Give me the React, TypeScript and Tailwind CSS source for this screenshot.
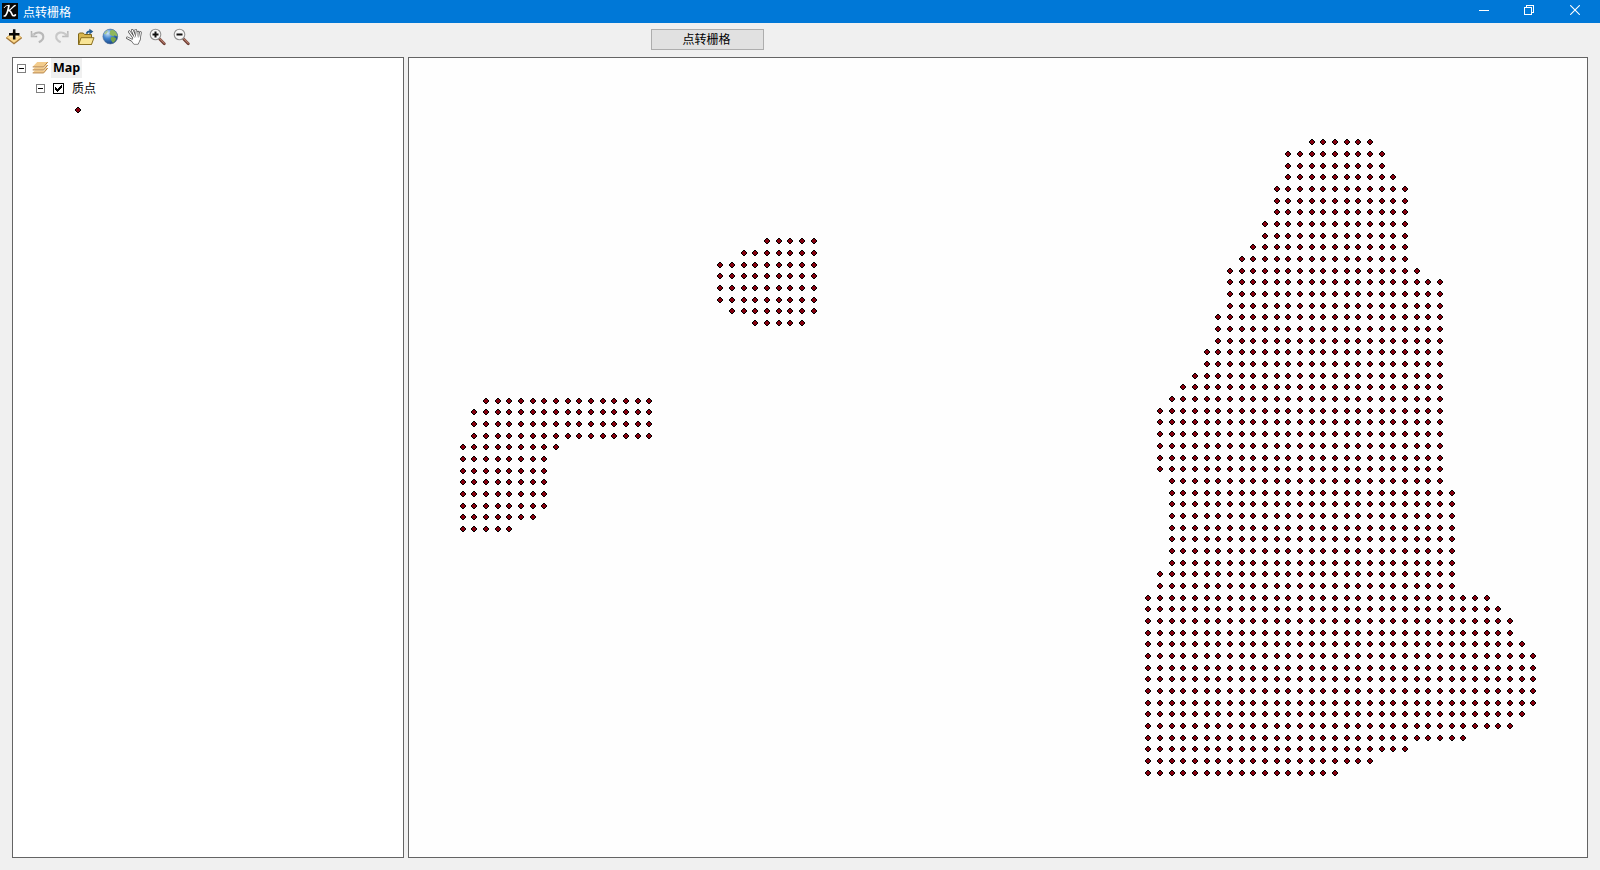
import type { ReactNode } from "react";

type Span = [from: number, to: number, rows: number];

interface Cluster {
  x: (i: number) => number;
  y: (j: number) => number;
  spans: Span[];
}

const STEP = 35 / 3;

const clusters: Cluster[] = [
  {
    x: (i) => 463 + Math.floor(i * STEP + 0.001),
    y: (j) => 401 + Math.floor(j * STEP + 0.001),
    spans: [[2, 16, 1], [1, 16, 3], [0, 8, 1], [0, 7, 5], [0, 6, 1], [0, 4, 1]],
  },
  {
    x: (i) => 720 + Math.ceil(i * STEP - 0.001),
    y: (j) => 241 + Math.ceil(j * STEP - 0.001),
    spans: [[4, 8, 1], [2, 8, 1], [0, 8, 4], [1, 8, 1], [3, 7, 1]],
  },
  {
    x: (i) => 1148 + Math.ceil(i * STEP - 0.001),
    y: (j) => 142 + Math.ceil(j * STEP + j * 0.001 - 0.025),
    spans: [
      [14, 19, 1], [12, 20, 2], [12, 21, 1], [11, 22, 3], [10, 22, 2], [9, 22, 1],
      [8, 22, 1], [7, 23, 1], [7, 25, 3], [6, 25, 3], [5, 25, 2], [4, 25, 1],
      [3, 25, 1], [2, 25, 1], [1, 25, 6], [2, 25, 1], [2, 26, 7], [1, 26, 2],
      [0, 29, 1], [0, 30, 1], [0, 31, 2], [0, 32, 1], [0, 33, 5], [0, 32, 1],
      [0, 31, 1], [0, 27, 1], [0, 22, 1], [0, 19, 1], [0, 16, 1],
    ],
  },
];

const points = clusters.flatMap(({ x, y, spans }) => {
  const out: { x: number; y: number }[] = [];
  let row = 0;
  for (const [from, to, rows] of spans) {
    for (let r = 0; r < rows; r++, row++) {
      for (let i = from; i <= to; i++) out.push({ x: x(i), y: y(row) });
    }
  }
  return out;
});

function Marker({ x, y }: { x: number; y: number }) {
  return (
    <g transform={`translate(${x - 3} ${y - 3})`}>
      <path d="M2 0h2v1h1v1h1v2h-1v1h-1v1h-2v-1h-1v-1h-1v-2h1v-1h1z" fill="#000" />
      <path d="M2 1h2v1h1v2h-1v1h-2v-1h-1v-2h1z" fill="#87000f" />
    </g>
  );
}

function Icon({ children }: { children: ReactNode }) {
  return (
    <svg className="block h-[18px] w-[18px]" viewBox="0 0 18 18" fill="none">
      {children}
    </svg>
  );
}

function AddIcon() {
  return (
    <Icon>
      <path d="M9 4 16.500 9.500 9 15.300 1.500 9.500Z" fill="#fbd98c" stroke="#d8ab5c" strokeWidth="1" />
      <path d="M1.300 9.800 9 15.800l7.700-6" stroke="#a5793c" strokeWidth="1.200" />
      <path d="M5 8.500h8" stroke="#fff0c4" strokeWidth="1.500" />
      <path d="M9.200 1.200v10.300M4 6.300h10.500" stroke="#080808" strokeWidth="2.500" />
    </Icon>
  );
}

function UndoIcon() {
  return (
    <Icon>
      <path d="M4.500 6.500C8.500 3 14 4.300 14.300 8.500c.1 2.700-1.500 4.400-4.500 5.800" stroke="#b8b8b8" strokeWidth="2.100" />
      <path d="M2.500 3v5.500h5.700" stroke="#b0b0b0" strokeWidth="1.500" />
      <path d="M2.500 4.500v4h4z" fill="#c4c4c4" />
    </Icon>
  );
}

function RedoIcon() {
  return (
    <Icon>
      <path d="M13 6.500C9 3 3.500 4.300 3.200 8.500c-.1 2.700 1.500 4.400 4.500 5.800" stroke="#c8c8c8" strokeWidth="2.100" />
      <path d="M14.800 3v5.500H9.200" stroke="#b6b6b6" strokeWidth="1.500" />
      <path d="M14.800 4.500v4h-4z" fill="#c6c6c6" />
    </Icon>
  );
}

function OpenIcon() {
  return (
    <Icon>
      <path d="M1.500 16.500V6l1-1h3.800l1.200 1.500h7V16.500z" fill="#d8b64e" stroke="#806719" strokeWidth="1" />
      <path d="M1.700 16.500 4 9.700h13l-2.500 6.800z" fill="#f9e596" stroke="#8a7020" strokeWidth="1" />
      <path d="M9.500 5.800c.7-2 2.200-2.500 3.800-2.300" stroke="#245c92" strokeWidth="1.700" />
      <path d="M12.400.800 16.300 3.600l-3.900 3z" fill="#245c92" />
    </Icon>
  );
}

function GlobeIcon() {
  return (
    <Icon>
      <defs>
        <radialGradient id="sea" cx=".33" cy=".28" r=".8">
          <stop offset="0" stopColor="#cfe6f8" />
          <stop offset=".45" stopColor="#4286cf" />
          <stop offset="1" stopColor="#123b7b" />
        </radialGradient>
      </defs>
      <circle cx="9.300" cy="8.500" r="7.400" fill="url(#sea)" stroke="#4b6d95" strokeWidth=".6" />
      <path d="M9 2.700 11.500 1.700c2.300.8 4 2.500 4.700 4.800l.2 2-1.600-.6-1.300-.6-1.300 1.200-2.200-1.200-1.600-1.200.7-1.600z" fill="#8fb75c" />
      <path d="m10.500 9 2.700.3 2 1.300-.9 2.100-2.300 2.300-1.600-2.300-.8-1.900z" fill="#78a548" />
      <path d="m2.900 6 1.700-2.600 2.300-1.100-.6 2.200-1.600 1.700z" fill="#a9c993" />
    </Icon>
  );
}

function HandIcon() {
  const fingers = "M9.300 10.500 4.300 3.700M10.500 10 7.300 2.300M11.800 10 10.700 2.200M13 10.500 13 4M14.200 12 15.400 4.500M8.300 13 2.300 9.800";
  const palm = "M8 9.700 14.800 9.200 14.500 13 13.200 16.200 8.800 16.200 6.500 13Z";
  return (
    <Icon>
      <path d={fingers} stroke="#4c4c4c" strokeWidth="2.600" strokeLinecap="round" />
      <path d={palm} fill="#fff" stroke="#777" strokeWidth="1" strokeLinejoin="round" />
      <path d={fingers} stroke="#fff" strokeWidth="1.200" strokeLinecap="round" />
      <path d="M8.400 10.200 14.300 9.700 13.900 13 12.800 15.600 9.200 15.600 7.400 12.700Z" fill="#fff" />
    </Icon>
  );
}

function ZoomIcon({ plus = false }: { plus?: boolean }) {
  return (
    <Icon>
      <path d="m10.600 11 4.700 4.700" stroke="#6a3a30" strokeWidth="2.800" strokeLinecap="round" />
      <path d="m11 10.900 4.300 4.300" stroke="#b9806f" strokeWidth="1.200" strokeLinecap="round" />
      <circle cx="6.500" cy="6.500" r="5.300" fill="#f8f8f8" stroke="#939393" strokeWidth="1.100" />
      <path d="M3.500 6.500h6" stroke="#111" strokeWidth="2" />
      {plus && <path d="M6.500 3.500v6" stroke="#111" strokeWidth="2" />}
    </Icon>
  );
}

function LayersIcon() {
  return (
    <svg className="block h-4 w-4" viewBox="0 0 16 16" fill="none">
      {[8, 5, 2].map((y) => (
        <g key={y} transform={`translate(0 ${y})`}>
          <path d="M5.200 0H15.800L11.800 4.800H.6z" fill="#fff" stroke="#fff" strokeWidth="1.600" />
          <path d="M5.200 0H15.600L11.600 4.600H.9z" fill="#f3cc8c" />
          <path d="M.7 4.900H11.700L15.700.1" stroke="#b57c33" strokeWidth="1" />
        </g>
      ))}
    </svg>
  );
}

function Collapse() {
  return (
    <span className="flex h-[9px] w-[9px] items-center justify-center border border-[#808080] bg-white">
      <span className="h-px w-[5px] bg-black" />
    </span>
  );
}

function TitleBar() {
  return (
    <header className="flex h-[23px] shrink-0 items-start bg-[#0078d7] text-white">
      <svg className="mt-[3px] ml-0.5 block h-4 w-4" viewBox="0 0 16 16">
        <rect width="16" height="16" fill="#080808" />
        <g fill="none" stroke="#fff" strokeLinecap="round">
          <path d="M2.200 4.600C3.500 2.300 5.500 2.200 7 2.700" strokeWidth="1" />
          <path d="M6.900 2.700C6.200 6.500 5.700 9.500 3.400 12.800L2.300 13" strokeWidth="1.700" />
          <path d="M13.200 2.500C10.800 3 9.600 7 6 7.600" strokeWidth="1.300" />
          <path d="M7.200 7.600c2.600.2 2 4.600 4 5.100.900.2 1.700-.2 2.200-.8" strokeWidth="1.700" />
        </g>
      </svg>
      <h1 className="ml-[5px] grow pt-px text-[12px] leading-[23px]">点转栅格</h1>
      <div className="flex h-full items-start pt-[5px] pr-5">
        <svg className="mr-[35px] block h-[10px] w-[10px]" viewBox="0 0 10 10" shapeRendering="crispEdges">
          <path d="M0 5h10v1H0z" fill="#fff" />
        </svg>
        <svg className="mr-9 block h-[10px] w-[10px]" viewBox="0 0 10 10" fill="none" stroke="#fff" shapeRendering="crispEdges">
          <path d="M.5 2.500h7v7h-7zM2.500 2.500v-2h7v7h-2" />
        </svg>
        <svg className="block h-[10px] w-[10px]" viewBox="0 0 10 10" fill="none" stroke="#fff" strokeWidth="1.100">
          <path d="m.2.2 9.600 9.600M9.800.2.2 9.800" />
        </svg>
      </div>
    </header>
  );
}

function Toolbar() {
  return (
    <div className="flex h-[34px] shrink-0 items-start">
      <div className="flex w-[197px] gap-[6px] pt-[5px] pl-[5px]">
        <AddIcon />
        <UndoIcon />
        <RedoIcon />
        <OpenIcon />
        <GlobeIcon />
        <HandIcon />
        <ZoomIcon plus />
        <ZoomIcon />
      </div>
      <button className="mt-[6px] ml-[454px] flex h-[21px] w-[113px] items-center justify-center border border-[#adadad] bg-[#e1e1e1] pr-[2px] text-[12px] leading-none text-black">
        点转栅格
      </button>
    </div>
  );
}

function LayerTree() {
  return (
    <aside className="w-[392px] shrink-0 border border-[#646464] bg-white text-[12px] text-black">
      <div className="flex h-5 items-center pl-1">
        <Collapse />
        <span className="ml-[6px]">
          <LayersIcon />
        </span>
        <span className="ml-[3px] h-5 w-[31px] bg-[#f0f0f0] pl-0.5 text-[12.500px] leading-[19px] font-bold">Map</span>
      </div>
      <div className="flex h-5 items-center pl-[23px]">
        <Collapse />
        <svg className="ml-2 block h-[11px] w-[11px]" viewBox="0 0 11 11" shapeRendering="crispEdges">
          <path d="M.5.5h10v10H.5z" fill="#fff" stroke="#000" />
          <path d="M2 4h1v1h1v1h1v-1h1v-1h1v-1h1v-1h1v3h-1v1h-1v1h-1v1h-1v1h-1v-1h-1v-1h-1z" fill="#000" />
        </svg>
        <span className="ml-2 pt-px leading-5">质点</span>
      </div>
      <svg className="mt-[9px] ml-[62px] block h-[6px] w-[6px]" viewBox="0 0 6 6" shapeRendering="crispEdges">
        <Marker x={3} y={3} />
      </svg>
    </aside>
  );
}

export default function App() {
  return (
    <div className="flex h-[870px] w-[1600px] flex-col overflow-hidden bg-[#f0f0f0] font-['Open_Sans','Noto_Sans_CJK_SC',sans-serif]">
      <TitleBar />
      <Toolbar />
      <main className="flex h-[801px] gap-1 pl-3">
        <LayerTree />
        <section className="w-[1180px] border border-[#646464] bg-[#fefefe]">
          <svg className="block h-[799px] w-[1178px]" viewBox="409 58 1178 799" shapeRendering="crispEdges">
            {points.map((p) => (
              <Marker key={`${p.x}-${p.y}`} x={p.x} y={p.y} />
            ))}
          </svg>
        </section>
      </main>
    </div>
  );
}
